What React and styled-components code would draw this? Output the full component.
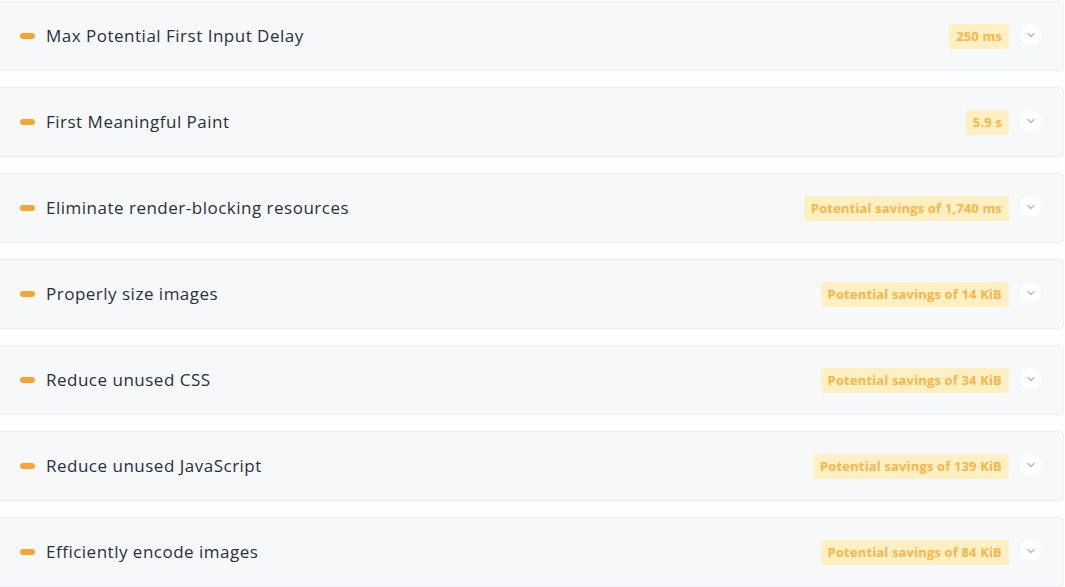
import React from "react";
import styled, { createGlobalStyle } from "styled-components";

const GlobalStyle = createGlobalStyle`
  html, body {
    margin: 0;
    padding: 0;
    background: #fcfdfe;
    font-family: "Open Sans", "Liberation Sans", sans-serif;
    overflow: hidden;
  }
`;

const audits = [
  { title: "Max Potential First Input Delay", value: "250 ms" },
  { title: "First Meaningful Paint", value: "5.9 s" },
  { title: "Eliminate render-blocking resources", value: "Potential savings of 1,740 ms" },
  { title: "Properly size images", value: "Potential savings of 14 KiB" },
  { title: "Reduce unused CSS", value: "Potential savings of 34 KiB" },
  { title: "Reduce unused JavaScript", value: "Potential savings of 139 KiB" },
  { title: "Efficiently encode images", value: "Potential savings of 84 KiB" },
];

const List = styled.div`
  display: flex;
  flex-direction: column;
  gap: 16px;
  margin: 1px 1px 0 -10px;
`;

const Card = styled.div`
  display: flex;
  align-items: center;
  height: 68px;
  padding: 0 22px 0 29px;
  background: #f7f8fa;
  border: 1px solid #eceef2;
  border-radius: 4px;
`;

const Pill = styled.span`
  width: 15px;
  height: 6px;
  border-radius: 3px;
  background: #f6a530;
  flex-shrink: 0;
  margin-right: 11px;
`;

const Title = styled.div`
  flex: 1;
  font-size: 17px;
  font-weight: 500;
  color: #28303f;
  letter-spacing: 0.5px;
  margin-top: -1px;
`;

const Badge = styled.span`
  display: inline-flex;
  align-items: center;
  height: 25px;
  padding: 0 7px;
  border-radius: 3px;
  background: #fff0c4;
  color: #f8b549;
  font-size: 13px;
  font-weight: 700;
  letter-spacing: 0.15px;
`;

const Toggle = styled.span`
  display: flex;
  align-items: center;
  justify-content: center;
  width: 21px;
  height: 21px;
  margin-left: 11px;
  border-radius: 50%;
  background: #ffffff;
  margin-top: -3px;
`;

function Chevron() {
  return (
    <svg width="10" height="10" viewBox="0 0 10 10" fill="none">
      <path d="M2 3.5 L5 6.5 L8 3.5" stroke="#b4bbd0" strokeWidth="1.5" strokeLinecap="round" strokeLinejoin="round" />
    </svg>
  );
}

export default function App() {
  return (
    <>
      <GlobalStyle />
      <List>
        {audits.map((a) => (
          <Card key={a.title}>
            <Pill />
            <Title>{a.title}</Title>
            <Badge>{a.value}</Badge>
            <Toggle>
              <Chevron />
            </Toggle>
          </Card>
        ))}
      </List>
    </>
  );
}
